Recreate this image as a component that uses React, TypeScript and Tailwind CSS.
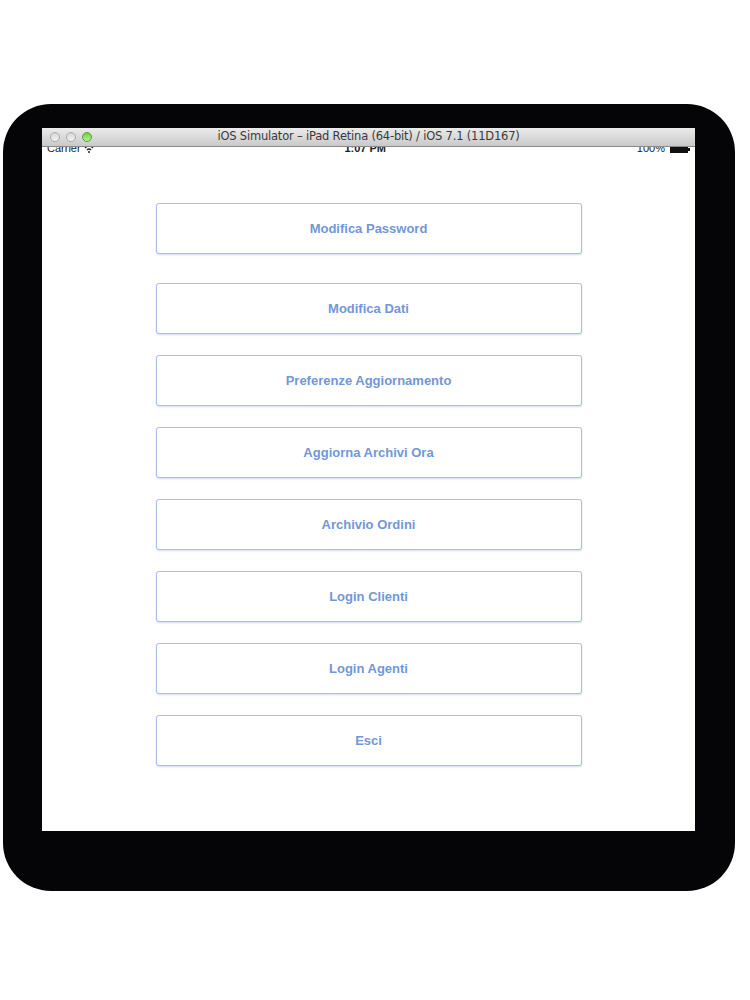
import React from "react";

const buttons = [
  "Modifica Password",
  "Modifica Dati",
  "Preferenze Aggiornamento",
  "Aggiorna Archivi Ora",
  "Archivio Ordini",
  "Login Clienti",
  "Login Agenti",
  "Esci",
];

function MenuButton({ label, className = "" }: { label: string; className?: string }) {
  return (
    <div
      className={`flex h-[51px] w-[426px] items-center justify-center rounded-[3px] border border-[#a9bfe4] bg-white shadow-[0_1px_2px_rgba(120,150,200,0.35)] ${className}`}
    >
      <span className="text-[13px] font-bold text-[#7197d8] [font-family:'Liberation_Sans',Arial,sans-serif]">
        {label}
      </span>
    </div>
  );
}

export default function App() {
  return (
    <div className="h-[1000px] w-[750px] bg-white pt-[104px] [font-family:'Liberation_Sans',Arial,sans-serif]">
      <div className="ml-[3px] h-[787px] w-[732px] rounded-[48px] bg-[#050407] pl-[39px] pt-[24px]">
        <div className="flex h-[703px] w-[653px] flex-col bg-white">
          {/* title bar */}
          <div className="relative flex h-[19px] shrink-0 items-center justify-center border-b border-[#8a8a8a] bg-gradient-to-b from-[#ececec] to-[#c9c9c9]">
            <div className="absolute left-[8px] top-[4px] flex gap-[6px]">
              <div className="h-[10px] w-[10px] rounded-full border border-[#a9a9a9] bg-gradient-to-b from-[#d8d8d8] to-[#f2f2f2]" />
              <div className="h-[10px] w-[10px] rounded-full border border-[#a9a9a9] bg-gradient-to-b from-[#d8d8d8] to-[#f2f2f2]" />
              <div className="h-[10px] w-[10px] rounded-full border border-[#5e9e3c] bg-gradient-to-b from-[#6fcf45] to-[#b8ef8e]" />
            </div>
            <span className="text-[11.5px] leading-none text-[#3a3a3a] [font-family:'DejaVu_Sans',sans-serif] tracking-[-0.2px]">
              iOS Simulator – iPad Retina (64-bit) / iOS 7.1 (11D167)
            </span>
          </div>
          {/* status bar, clipped by title bar */}
          <div className="relative flex h-[7px] shrink-0 items-end overflow-hidden px-[5px]">
            <div className="flex w-full items-end justify-between">
              <span className="flex items-end text-[11px] leading-[11px] text-[#222]">
                Carrier
                <svg width="10" height="8" viewBox="0 0 10 8" className="mb-[1px] ml-[3px]">
                  <path d="M1 3 Q5 -1 9 3" stroke="#222" strokeWidth="1.3" fill="none" />
                  <path d="M3 5 Q5 3 7 5" stroke="#222" strokeWidth="1.3" fill="none" />
                  <circle cx="5" cy="7" r="1" fill="#222" />
                </svg>
              </span>
              <span className="text-[11px] font-bold leading-[11px] text-[#222]">1:07 PM</span>
              <span className="flex items-end text-[11px] leading-[11px] text-[#222]">
                100%
                <span className="mb-[1px] ml-[5px] h-[8px] w-[18px] bg-[#111]" />
                <span className="mb-[3px] h-[3px] w-[2px] bg-[#111]" />
              </span>
            </div>
          </div>
          {/* buttons */}
          <div className="mt-[49px] flex flex-col items-center">
            <MenuButton label={buttons[0]} />
            <div className="mt-[29px] flex flex-col gap-[21px]">
              {buttons.slice(1).map((b) => (
                <MenuButton key={b} label={b} />
              ))}
            </div>
          </div>
        </div>
      </div>
    </div>
  );
}
